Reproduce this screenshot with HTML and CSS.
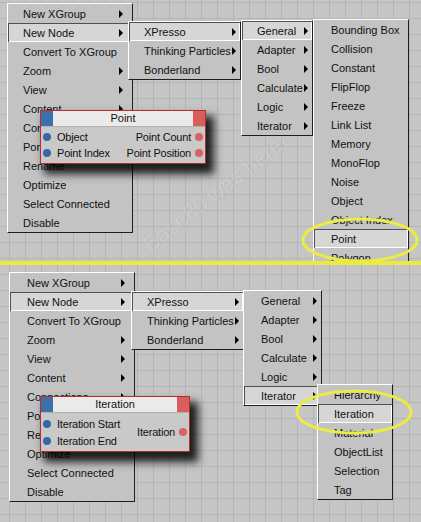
FILE: index.html
```html
<!DOCTYPE html>
<html lang="en">
<head>
    <meta charset="UTF-8">
    <title>XPresso Nodes</title>
    <link rel="stylesheet" href="styles.css">
</head>
<body>
    <div class="panel top">
        <div class="watermark">Base80 was here!</div>

        <div class="menu main">
            <div class="item sub">New XGroup</div>
            <div class="item sub on">New Node</div>
            <div class="item">Convert To XGroup</div>
            <div class="item sub">Zoom</div>
            <div class="item sub">View</div>
            <div class="item sub">Content</div>
            <div class="item sub">Connections</div>
            <div class="item">Ports</div>
            <div class="item">Rename</div>
            <div class="item">Optimize</div>
            <div class="item">Select Connected</div>
            <div class="item">Disable</div>
        </div>
        <div class="menu sub1">
            <div class="item sub on">XPresso</div>
            <div class="item sub">Thinking Particles</div>
            <div class="item sub">Bonderland</div>
        </div>
        <div class="menu sub2">
            <div class="item sub on">General</div>
            <div class="item sub">Adapter</div>
            <div class="item sub">Bool</div>
            <div class="item sub">Calculate</div>
            <div class="item sub">Logic</div>
            <div class="item sub">Iterator</div>
        </div>
        <div class="menu sub3">
            <div class="item">Bounding Box</div>
            <div class="item">Collision</div>
            <div class="item">Constant</div>
            <div class="item">FlipFlop</div>
            <div class="item">Freeze</div>
            <div class="item">Link List</div>
            <div class="item">Memory</div>
            <div class="item">MonoFlop</div>
            <div class="item">Noise</div>
            <div class="item">Object</div>
            <div class="item">Object Index</div>
            <div class="item on">Point</div>
            <div class="item">Polygon</div>
        </div>

        <div class="node point">
            <div class="node-head">
                <span class="tab in"></span>
                <span class="title">Point</span>
                <span class="tab out"></span>
            </div>
            <div class="node-body">
                <div class="ports left">
                    <div class="port"><i class="dot in"></i>Object</div>
                    <div class="port"><i class="dot in"></i>Point Index</div>
                </div>
                <div class="ports right">
                    <div class="port">Point Count<i class="dot out"></i></div>
                    <div class="port">Point Position<i class="dot out"></i></div>
                </div>
            </div>
        </div>

        <svg class="mark" width="421" height="261">
            <ellipse cx="360" cy="240" rx="57" ry="21"></ellipse>
        </svg>
    </div>

    <div class="divider"></div>

    <div class="panel bottom">
        <div class="menu main">
            <div class="item sub">New XGroup</div>
            <div class="item sub on">New Node</div>
            <div class="item">Convert To XGroup</div>
            <div class="item sub">Zoom</div>
            <div class="item sub">View</div>
            <div class="item sub">Content</div>
            <div class="item sub">Connections</div>
            <div class="item">Ports</div>
            <div class="item">Rename</div>
            <div class="item">Optimize</div>
            <div class="item">Select Connected</div>
            <div class="item">Disable</div>
        </div>
        <div class="menu sub1">
            <div class="item sub on">XPresso</div>
            <div class="item sub">Thinking Particles</div>
            <div class="item sub">Bonderland</div>
        </div>
        <div class="menu sub2">
            <div class="item sub">General</div>
            <div class="item sub">Adapter</div>
            <div class="item sub">Bool</div>
            <div class="item sub">Calculate</div>
            <div class="item sub">Logic</div>
            <div class="item sub on">Iterator</div>
        </div>
        <div class="menu sub3">
            <div class="item">Hierarchy</div>
            <div class="item on">Iteration</div>
            <div class="item">Material</div>
            <div class="item">ObjectList</div>
            <div class="item">Selection</div>
            <div class="item">Tag</div>
        </div>

        <div class="node iteration">
            <div class="node-head">
                <span class="tab in"></span>
                <span class="title">Iteration</span>
                <span class="tab out"></span>
            </div>
            <div class="node-body">
                <div class="ports left">
                    <div class="port"><i class="dot in"></i>Iteration Start</div>
                    <div class="port"><i class="dot in"></i>Iteration End</div>
                </div>
                <div class="ports right">
                    <div class="port">Iteration<i class="dot out"></i></div>
                </div>
            </div>
        </div>

        <svg class="mark" width="421" height="257">
            <ellipse cx="354" cy="147" rx="57" ry="21"></ellipse>
        </svg>
    </div>
</body>
</html>
```

FILE: styles.css
```css
body {
    margin: 0;
    width: 421px;
    font-family: "Liberation Sans", Arial, sans-serif;
    font-size: 11px;
    color: #111;
}
.panel {
    position: relative;
    overflow: hidden;
    background-color: #c5c5c5;
    background-image:
        linear-gradient(to right, #b5b5b5 1px, transparent 1px),
        linear-gradient(to bottom, #b5b5b5 1px, transparent 1px);
    background-size: 16px 16px;
}
.panel.top {
    height: 261px;
    background-position: 9px 2px;
}
.panel.bottom {
    height: 257px;
    background-position: 9px 9px;
}
.divider {
    height: 4px;
    background: #ebeb3f;
}

/* popup menus */
.menu {
    position: absolute;
    display: flex;
    flex-direction: column;
    background: #c3c3c3;
    border: 1px solid;
    border-color: #fff #1e1e1e #1e1e1e #fff;
}
.item {
    display: flex;
    align-items: center;
    height: 19px;
    padding: 0 4px 0 15px;
    white-space: nowrap;
}
.item.sub::after {
    content: "";
    margin-left: auto;
    border-left: 4px solid #000;
    border-top: 4px solid transparent;
    border-bottom: 4px solid transparent;
}
.item.on {
    background: #d6d6d6;
    box-shadow: inset 1px 1px #505050, inset -1px -1px #fff;
}
.main .item {
    padding-right: 9px;
}
.top .main { left: 7px; top: 3px; width: 124px; }
.top .sub1 { left: 128px; top: 21px; width: 111px; }
.top .sub2 { left: 241px; top: 20px; width: 70px; }
.top .sub3 { left: 313px; top: 19px; width: 94px; }
.top .sub3 .item { padding-left: 17px; }

.bottom .main { left: 9px; top: 7px; width: 124px; }
.bottom .main .item { padding-left: 17px; }
.bottom .sub1 { left: 131px; top: 26px; width: 111px; }
.bottom .sub2 { left: 243px; top: 25px; width: 77px; }
.bottom .sub2 .item { padding-left: 17px; }
.bottom .sub3 { left: 317px; top: 119px; width: 74px; }
.bottom .sub3 .item { padding-left: 16px; }

/* xpresso nodes */
.node {
    position: absolute;
    display: flex;
    flex-direction: column;
    border: 1px solid #b82c2c;
    background: #c9c9c9;
    box-shadow: 6px 8px 8px 2px rgba(0, 0, 0, 0.85);
}
.node.point { left: 40px; top: 110px; width: 164px; height: 52px; }
.node.iteration { left: 40px; top: 131px; width: 148px; height: 54px; }
.node-head {
    display: flex;
    height: 15px;
    border-bottom: 1px solid #b0b0b0;
}
.tab {
    width: 12px;
}
.tab.in {
    background: #3d6fab;
}
.tab.out {
    background: #d85e5c;
}
.title {
    flex: 1;
    background: #eaeaea;
    text-align: center;
    line-height: 15px;
}
.node-body {
    flex: 1;
    display: flex;
    justify-content: space-between;
    padding: 2px 0;
}
.ports {
    display: flex;
    flex-direction: column;
}
.ports.right {
    justify-content: center;
    align-items: flex-end;
}
.port {
    display: flex;
    align-items: center;
    height: 16px;
    letter-spacing: -0.2px;
    white-space: nowrap;
}
.iteration .port {
    height: 17px;
}
.dot {
    width: 8px;
    height: 8px;
    border-radius: 50%;
    margin: 0 2px;
}
.dot.in {
    background: #3768a6;
    margin-right: 6px;
}
.dot.out {
    background: #d96363;
    margin-left: 4px;
}

.watermark {
    position: absolute;
    left: 128px;
    top: 180px;
    font-size: 22px;
    color: rgba(255, 255, 255, 0.16);
    text-shadow: 1px 1px 0 rgba(0, 0, 0, 0.05);
    transform: rotate(-38deg);
    white-space: nowrap;
}
.mark {
    position: absolute;
    left: 0;
    top: 0;
    pointer-events: none;
}
.mark ellipse {
    fill: none;
    stroke: #ecec42;
    stroke-width: 3;
}
```
